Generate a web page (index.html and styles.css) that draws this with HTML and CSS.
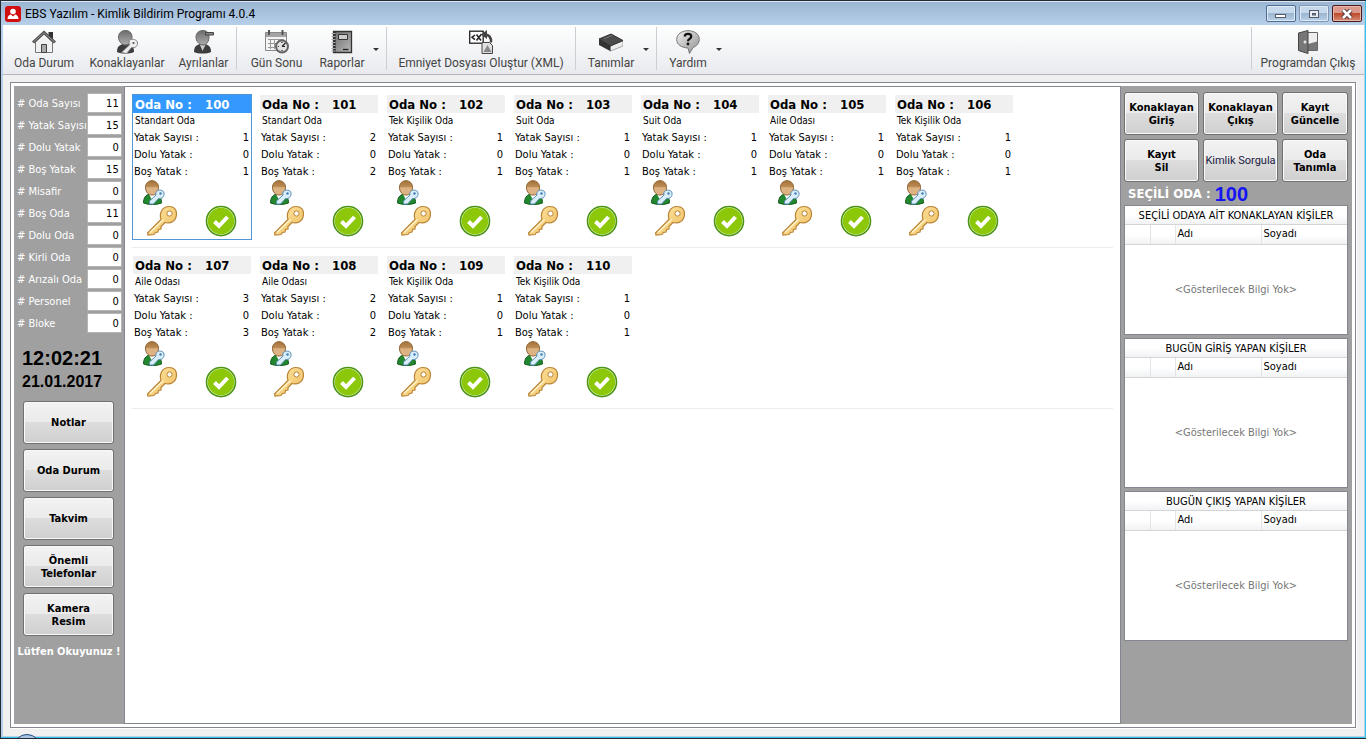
FILE: index.html
```
<!DOCTYPE html>
<html lang="tr">
<head>
<meta charset="utf-8">
<title>EBS Yazılım - Kimlik Bildirim Programı 4.0.4</title>
<link rel="stylesheet" href="styles.css">
</head>
<body>
<svg class="defs" aria-hidden="true">
  <defs>
    <linearGradient id="g-skin" x1="0" y1="0" x2="0" y2="1"><stop offset="0" stop-color="#a5713a"/><stop offset=".4" stop-color="#b98a52"/><stop offset=".5" stop-color="#dcb283"/><stop offset="1" stop-color="#e0b483"/></linearGradient>
    <linearGradient id="g-gray" x1="0" y1="0" x2="0" y2="1"><stop offset="0" stop-color="#6c6c6c"/><stop offset="1" stop-color="#adadad"/></linearGradient>
    <linearGradient id="g-key" x1="0" y1="0" x2="1" y2="1"><stop offset="0" stop-color="#ffe9a8"/><stop offset="1" stop-color="#eebb5c"/></linearGradient>
    <linearGradient id="g-bubble" x1="0" y1="0" x2="1" y2="1"><stop offset="0" stop-color="#efefef"/><stop offset="1" stop-color="#8f8f8f"/></linearGradient>
    <linearGradient id="g-book" x1="0" y1="0" x2="1" y2="1"><stop offset="0" stop-color="#6e6e6e"/><stop offset="1" stop-color="#b8b8b8"/></linearGradient>
  </defs>
  <symbol id="person" viewBox="0 0 24 26">
    <path d="M1.500 23c0-5 2-8 6-9h6c4 1 6 4 6 9-5 2-13 2-18 0z" fill="#23872f" stroke="#125c1c"/>
    <path d="M7 14l3 6 4-6z" fill="#fff"/>
    <path d="M3.500 7.500C3.500 3 6.500.7 10 .7s6.500 2.300 6.500 6.800c0 4.500-3 7.500-6.500 7.500s-6.500-3-6.500-7.500z" fill="url(#g-skin)" stroke="#8e6231"/>
    <path d="M14.500 11.500c2-2 7-2 7.500 1.500.5 3.500-2 6-5.500 5.500l-5 5.500H7.500v-3l6.500-6c-.3-1.500-.2-2.500.5-3.500z" fill="#d9edfb" stroke="#5d8fb8"/>
    <circle cx="18.500" cy="13.500" r="1.200" fill="#417eae"/>
  </symbol>
  <symbol id="key" viewBox="0 0 32 32">
    <path d="M1.500 28L15 14.500C13 8.500 16 1.500 23 1.500c5.500 0 7.500 3 7.500 7.500 0 7-6 10-11.500 8.500l-4 4V24l-2.500.5-.5 2.500-2.500.5-1.500 2-6 .5z" fill="url(#g-key)" stroke="#b98436" stroke-width="1.200"/>
    <circle cx="23.500" cy="8.500" r="2.600" fill="#fff" stroke="#b98436"/>
    <path d="M4 27.500L17.500 14.500" stroke="#fff3cb" stroke-width="1.500"/>
  </symbol>
  <symbol id="check" viewBox="0 0 32 32">
    <circle cx="16" cy="16.500" r="15" fill="#b5bfaa"/>
    <circle cx="16" cy="16" r="14.500" fill="#e4f5c4" stroke="#4b9414" stroke-width="1.600"/>
    <circle cx="16" cy="16" r="13.200" fill="#8cc70a"/>
    <path d="M9.500 16.500l4.500 4.500 8.500-9" fill="none" stroke="#fff" stroke-width="4"/>
  </symbol>
</svg>

<div class="window">
  <header class="titlebar">
    <svg class="app-icon" viewBox="0 0 16 16" aria-hidden="true"><rect width="16" height="16" rx="3" fill="#d10d0d"/><circle cx="8" cy="5.500" r="2.800" fill="#fff"/><path d="M2.500 13c0-3 2-4.500 3.500-4.500l2 2 2-2c1.500 0 3.500 1.500 3.500 4.500z" fill="#fff"/></svg>
    <h1 class="title">EBS Yazılım - Kimlik Bildirim Programı 4.0.4</h1>
    <div class="window-buttons">
      <button class="win-btn" aria-label="Simge durumuna küçült"><svg viewBox="0 0 12 10"><rect x=".5" y="5.500" width="10" height="3" fill="#fff" stroke="#555b66"/></svg></button>
      <button class="win-btn win-max" aria-label="Ekranı kapla"><svg viewBox="0 0 12 10"><rect x="1.500" y="1.500" width="9" height="7" fill="#e8eef4" stroke="#555b66"/><rect x="4.500" y="4.500" width="3" height="1.500" fill="#8ba5c0" stroke="#555b66"/></svg></button>
      <button class="win-btn win-close" aria-label="Kapat"><svg viewBox="0 0 12 10"><path d="M2 1l8 8M10 1L2 9" stroke="#45303a" stroke-width="4.500"/><path d="M2 1l8 8M10 1L2 9" stroke="#fff" stroke-width="2.600"/></svg></button>
    </div>
  </header>

  <nav class="toolbar">
    <button class="tool w-room"><svg viewBox="0 0 24 24"><path d="M16.500 2H21v9h-4.500z" fill="#333"/><path d="M3.500 12L12 4l8.500 8v10.500h-17z" fill="#f1f1f1" stroke="#777"/><path d="M1 12.500L12 2.500l11 10" fill="none" stroke="#4c4c4c" stroke-width="3"/><path d="M1.500 12L12 2.700 22.500 12" fill="none" stroke="#999" stroke-width="1"/><path d="M9.500 14.500h5v8h-5z" fill="#aaa" stroke="#444"/></svg>Oda Durum</button>
    <button class="tool w-guests"><svg viewBox="0 0 24 24"><path d="M2 22c0-5 2-7 6-8h5c4 1 6 3 6 8-4 2-13 2-17 0z" fill="#3d3d3d"/><path d="M3.500 7c0-4 3-6.500 7-6.500s6.500 2.500 6.500 6.500-2.500 8-6.500 8-7-4-7-8z" fill="url(#g-gray)" stroke="#666"/><path d="M14.500 10c3-1.500 8-.5 8 3s-2 5-6 4.500l-5 6-5-1 8-7.500c-.3-2-.5-4 0-5z" fill="#eee" stroke="#888"/><circle cx="18.500" cy="13" r="1.100" fill="#555"/></svg>Konaklayanlar</button>
    <button class="tool w-left"><svg viewBox="0 0 24 24"><path d="M2 22c0-5 2-7 6-8h5c4 1 6 3 6 8-4 2-13 2-17 0z" fill="#3d3d3d"/><path d="M8 15l2.500 6 3-6z" fill="#ccc"/><path d="M4 7c0-4 3-6.500 7-6.500s6 2.500 6 6.500-2 8-6 8-7-4-7-8z" fill="url(#g-gray)" stroke="#666"/><path d="M13.500 2.500h8v2.500h-8z" fill="#888" stroke="#444"/></svg>Ayrılanlar</button>
    <span class="sep"></span>
    <button class="tool w-day"><svg viewBox="0 0 24 24"><path d="M.5 2.500h21v18H.5z" fill="#f4f4f4" stroke="#888"/><path d="M1 3h20v4H1z" fill="#a4a4a4"/><path d="M4 0v5M17.500 0v5" stroke="#555" stroke-width="2"/><path d="M3 9.500h16M3 13.500h14M3 17.500h12M5.500 9v10M9.500 9v10M13.500 9v9" stroke="#999"/><circle cx="17" cy="16.500" r="6" fill="#e2e2e2" stroke="#666" stroke-width="2"/><path d="M17 16.500l3.500-3.500M17 16.500h3M17 12v1M12.800 16.500h1M17 20v1" stroke="#222" stroke-width="1.200"/></svg>Gün Sonu</button>
    <button class="tool w-reports"><svg viewBox="0 0 24 24"><path d="M3.500 1.500h18v21h-18z" fill="url(#g-book)" stroke="#333" stroke-width="1.300"/><path d="M4.500 1.500v21" stroke="#333" stroke-width="2.500"/><path d="M1.500 3.500h4M1.500 6.500h4M1.500 9.500h4M1.500 12.500h4M1.500 15.500h4M1.500 18.500h4M1.500 21h4" stroke="#aaa"/><path d="M8.500 4.500h9v5h-9z" fill="#ccc" stroke="#333"/><path d="M13 19.500h5.500" stroke="#222" stroke-width="1.300"/></svg>Raporlar</button>
    <button class="drop" aria-label="Raporlar menüsü"></button>
    <span class="sep"></span>
    <button class="tool w-xml"><svg viewBox="0 0 24 24"><rect x=".7" y="1.200" width="13.500" height="12" fill="#fff" stroke="#222" stroke-width="1.300"/><path d="M6 5L3 7.300 6 9.600M7.500 4.500l4.500 6M12.500 4l-5 6.500" fill="none" stroke="#222" stroke-width="1.500"/><path d="M13 12.500h7.500l3 3v8H13z" fill="#e0e0e0" stroke="#444"/><path d="M14.500 22l4-7 4 7z" fill="#888"/><path d="M16 4.500c4 0 6.500 3 6 8" fill="none" stroke="#444" stroke-width="2.500"/><path d="M18 0v9l-6-4.500z" fill="#444"/></svg>Emniyet Dosyası Oluştur (XML)</button>
    <span class="sep"></span>
    <button class="tool w-defs"><svg viewBox="0 0 24 24"><path d="M0 9v6l12 6.500V15z" fill="#333"/><path d="M11.500 15.500L24 11v5l-12.500 5z" fill="#eee" stroke="#777" stroke-width=".6"/><path d="M0 9l12-5 12 6.500-12.500 5.500z" fill="#4b4b4e" stroke="#333"/><path d="M5 8.800l8-3.300" stroke="#777"/></svg>Tanımlar</button>
    <button class="drop" aria-label="Tanımlar menüsü"></button>
    <span class="sep"></span>
    <button class="tool w-help"><svg viewBox="0 0 24 24"><path d="M12 .7c6 0 11.300 3 11.300 8.500 0 4-2.500 6.800-6.300 8.300l-3.500 6-1.500-5.500C5 17.500.7 14.500.7 9.500.7 4 6 .7 12 .7z" fill="url(#g-bubble)" stroke="#777"/><path d="M8.800 6.500c0-3.500 6.400-3.500 6.400 0 0 2.500-3.200 2.300-3.200 4.800" fill="none" stroke="#111" stroke-width="2.300"/><circle cx="12" cy="14" r="1.400" fill="#111"/></svg>Yardım</button>
    <button class="drop" aria-label="Yardım menüsü"></button>
    <span class="spring"></span>
    <span class="sep"></span>
    <button class="tool w-exit"><svg viewBox="0 0 24 24"><path d="M11 2.500h10.500v18H11z" fill="#eee" stroke="#666"/><path d="M12 14l9-2.500V20h-9z" fill="#777"/><path d="M2.500 3l9.500-2.500v23L2.500 20.500z" fill="#777" stroke="#444"/><path d="M9 10.500v3M7.500 12h3" stroke="#fff" stroke-width="1.200"/></svg>Programdan Çıkış</button>
  </nav>

  <main class="client">
    <div class="frame">
      <aside class="sidebar">
        <div class="stats">
          <label for="s1"># Oda Sayısı</label><input id="s1" value="11" readonly>
          <label for="s2"># Yatak Sayısı</label><input id="s2" value="15" readonly>
          <label for="s3"># Dolu Yatak</label><input id="s3" value="0" readonly>
          <label for="s4"># Boş Yatak</label><input id="s4" value="15" readonly>
          <label for="s5"># Misafir</label><input id="s5" value="0" readonly>
          <label for="s6"># Boş Oda</label><input id="s6" value="11" readonly>
          <label for="s7"># Dolu Oda</label><input id="s7" value="0" readonly>
          <label for="s8"># Kirli Oda</label><input id="s8" value="0" readonly>
          <label for="s9"># Arızalı Oda</label><input id="s9" value="0" readonly>
          <label for="s10"># Personel</label><input id="s10" value="0" readonly>
          <label for="s11"># Bloke</label><input id="s11" value="0" readonly>
        </div>
        <time class="clock">12:02:21</time>
        <time class="date">21.01.2017</time>
        <div class="side-buttons">
          <button class="btn">Notlar</button>
          <button class="btn">Oda Durum</button>
          <button class="btn">Takvim</button>
          <button class="btn">Önemli<br>Telefonlar</button>
          <button class="btn">Kamera<br>Resim</button>
        </div>
        <p class="notice">Lütfen Okuyunuz !</p>
      </aside>

      <section class="rooms">
        <div class="room-row">
          <article class="room selected"><h2><span>Oda No :</span>100</h2><p class="kind">Standart Oda</p><dl><dt>Yatak Sayısı :</dt><dd>1</dd><dt>Dolu Yatak :</dt><dd>0</dd><dt>Boş Yatak :</dt><dd>1</dd></dl><div class="icons"><svg class="person"><use href="#person"/></svg><svg class="key"><use href="#key"/></svg><svg class="check"><use href="#check"/></svg></div></article>
          <article class="room"><h2><span>Oda No :</span>101</h2><p class="kind">Standart Oda</p><dl><dt>Yatak Sayısı :</dt><dd>2</dd><dt>Dolu Yatak :</dt><dd>0</dd><dt>Boş Yatak :</dt><dd>2</dd></dl><div class="icons"><svg class="person"><use href="#person"/></svg><svg class="key"><use href="#key"/></svg><svg class="check"><use href="#check"/></svg></div></article>
          <article class="room"><h2><span>Oda No :</span>102</h2><p class="kind">Tek Kişilik Oda</p><dl><dt>Yatak Sayısı :</dt><dd>1</dd><dt>Dolu Yatak :</dt><dd>0</dd><dt>Boş Yatak :</dt><dd>1</dd></dl><div class="icons"><svg class="person"><use href="#person"/></svg><svg class="key"><use href="#key"/></svg><svg class="check"><use href="#check"/></svg></div></article>
          <article class="room"><h2><span>Oda No :</span>103</h2><p class="kind">Suit Oda</p><dl><dt>Yatak Sayısı :</dt><dd>1</dd><dt>Dolu Yatak :</dt><dd>0</dd><dt>Boş Yatak :</dt><dd>1</dd></dl><div class="icons"><svg class="person"><use href="#person"/></svg><svg class="key"><use href="#key"/></svg><svg class="check"><use href="#check"/></svg></div></article>
          <article class="room"><h2><span>Oda No :</span>104</h2><p class="kind">Suit Oda</p><dl><dt>Yatak Sayısı :</dt><dd>1</dd><dt>Dolu Yatak :</dt><dd>0</dd><dt>Boş Yatak :</dt><dd>1</dd></dl><div class="icons"><svg class="person"><use href="#person"/></svg><svg class="key"><use href="#key"/></svg><svg class="check"><use href="#check"/></svg></div></article>
          <article class="room"><h2><span>Oda No :</span>105</h2><p class="kind">Aile Odası</p><dl><dt>Yatak Sayısı :</dt><dd>1</dd><dt>Dolu Yatak :</dt><dd>0</dd><dt>Boş Yatak :</dt><dd>1</dd></dl><div class="icons"><svg class="person"><use href="#person"/></svg><svg class="key"><use href="#key"/></svg><svg class="check"><use href="#check"/></svg></div></article>
          <article class="room"><h2><span>Oda No :</span>106</h2><p class="kind">Tek Kişilik Oda</p><dl><dt>Yatak Sayısı :</dt><dd>1</dd><dt>Dolu Yatak :</dt><dd>0</dd><dt>Boş Yatak :</dt><dd>1</dd></dl><div class="icons"><svg class="person"><use href="#person"/></svg><svg class="key"><use href="#key"/></svg><svg class="check"><use href="#check"/></svg></div></article>
        </div>
        <div class="room-row">
          <article class="room"><h2><span>Oda No :</span>107</h2><p class="kind">Aile Odası</p><dl><dt>Yatak Sayısı :</dt><dd>3</dd><dt>Dolu Yatak :</dt><dd>0</dd><dt>Boş Yatak :</dt><dd>3</dd></dl><div class="icons"><svg class="person"><use href="#person"/></svg><svg class="key"><use href="#key"/></svg><svg class="check"><use href="#check"/></svg></div></article>
          <article class="room"><h2><span>Oda No :</span>108</h2><p class="kind">Aile Odası</p><dl><dt>Yatak Sayısı :</dt><dd>2</dd><dt>Dolu Yatak :</dt><dd>0</dd><dt>Boş Yatak :</dt><dd>2</dd></dl><div class="icons"><svg class="person"><use href="#person"/></svg><svg class="key"><use href="#key"/></svg><svg class="check"><use href="#check"/></svg></div></article>
          <article class="room"><h2><span>Oda No :</span>109</h2><p class="kind">Tek Kişilik Oda</p><dl><dt>Yatak Sayısı :</dt><dd>1</dd><dt>Dolu Yatak :</dt><dd>0</dd><dt>Boş Yatak :</dt><dd>1</dd></dl><div class="icons"><svg class="person"><use href="#person"/></svg><svg class="key"><use href="#key"/></svg><svg class="check"><use href="#check"/></svg></div></article>
          <article class="room"><h2><span>Oda No :</span>110</h2><p class="kind">Tek Kişilik Oda</p><dl><dt>Yatak Sayısı :</dt><dd>1</dd><dt>Dolu Yatak :</dt><dd>0</dd><dt>Boş Yatak :</dt><dd>1</dd></dl><div class="icons"><svg class="person"><use href="#person"/></svg><svg class="key"><use href="#key"/></svg><svg class="check"><use href="#check"/></svg></div></article>
        </div>
      </section>

      <aside class="panel">
        <div class="actions">
          <button class="btn">Konaklayan<br>Giriş</button>
          <button class="btn">Konaklayan<br>Çıkış</button>
          <button class="btn">Kayıt<br>Güncelle</button>
          <button class="btn">Kayıt<br>Sil</button>
          <button class="btn plain">Kimlik Sorgula</button>
          <button class="btn">Oda<br>Tanımla</button>
        </div>
        <p class="chosen">SEÇİLİ ODA : <strong>100</strong></p>
        <div class="grid-box short">
          <table><caption>SEÇİLİ ODAYA AİT KONAKLAYAN KİŞİLER</caption><thead><tr><th class="c-mark"></th><th class="c-mark"></th><th class="c-name">Adı</th><th>Soyadı</th></tr></thead></table>
          <p class="empty">&lt;Gösterilecek Bilgi Yok&gt;</p>
        </div>
        <div class="grid-box">
          <table><caption>BUGÜN GİRİŞ YAPAN KİŞİLER</caption><thead><tr><th class="c-mark"></th><th class="c-mark"></th><th class="c-name">Adı</th><th>Soyadı</th></tr></thead></table>
          <p class="empty">&lt;Gösterilecek Bilgi Yok&gt;</p>
        </div>
        <div class="grid-box">
          <table><caption>BUGÜN ÇIKIŞ YAPAN KİŞİLER</caption><thead><tr><th class="c-mark"></th><th class="c-mark"></th><th class="c-name">Adı</th><th>Soyadı</th></tr></thead></table>
          <p class="empty">&lt;Gösterilecek Bilgi Yok&gt;</p>
        </div>
      </aside>
    </div>
  </main>
  <div class="orb"></div>
</div>
</body>
</html>
```
FILE: styles.css
```
* { box-sizing: border-box; }
body {
  margin: 0;
  background: #2b3440;
  color: #000;
  font: 11px/13px "DejaVu Sans Condensed", "DejaVu Sans", sans-serif;
}
h1, h2, p, dl, dd { margin: 0; }
button, input { font: inherit; color: inherit; }
svg { display: block; }
.defs { position: absolute; width: 0; height: 0; }

.window {
  position: relative;
  display: flex;
  flex-direction: column;
  height: 100vh;
  overflow: hidden;
  background: #b7cfe9;
  border: solid #222a33;
  border-width: 1px 0 1px 1px;
}
.window::before {
  content: "";
  position: absolute;
  inset: 0;
  border: solid #35c3e8;
  border-width: 0 1px 1px 0;
  pointer-events: none;
}

/* Title bar */
.titlebar {
  display: flex;
  align-items: center;
  flex: none;
  height: 24px;
  padding: 0 4px;
  gap: 4px;
  background: linear-gradient(#9bb6d4, #b7cfe9);
  border-top: 1px solid #dce8f4;
}
.app-icon { width: 16px; height: 16px; }
.title { font: 12px/16px Roboto, sans-serif; flex: 1; }
.window-buttons { display: flex; gap: 3px; }
.win-btn {
  display: flex;
  align-items: center;
  justify-content: center;
  width: 30px;
  height: 17px;
  padding: 0;
  border: 1px solid #4f6d91;
  border-radius: 2px;
  background: linear-gradient(#c6d8eb 45%, #9cb5d0 50%, #b9d2ea);
  box-shadow: inset 0 0 0 1px #dfeaf5;
}
.win-btn svg { width: 12px; height: 10px; }
.win-max { border-color: #8199b6; }
.win-close {
  border-color: #4a1a1a;
  background: linear-gradient(#dd9a8c 45%, #bd4a2b 50%, #d68c76);
  box-shadow: inset 0 0 0 1px #e8b6ab;
}

/* Toolbar */
.toolbar {
  display: flex;
  flex: none;
  height: 50px;
  margin: 0 2px;
  padding: 2px 0 2px 2px;
  background: linear-gradient(#fff, #e8eaee);
  border-bottom: 1px solid #b4b8be;
  color: #444;
  font: 12px/16px Roboto, sans-serif;
}
.tool {
  display: flex;
  flex-direction: column;
  align-items: center;
  flex: none;
  padding: 3px 0 0;
  border: 0;
  background: none;
  white-space: nowrap;
}
.tool svg { width: 24px; height: 24px; margin-bottom: 1px; }
.w-room { width: 78px; }
.w-guests { width: 88px; }
.w-left { width: 65px; }
.w-day { width: 79px; }
.w-reports { width: 56px; padding-right: 4px; }
.w-xml { width: 188px; }
.w-defs { width: 66px; padding-left: 4px; }
.w-help { width: 58px; padding-left: 4px; }
.w-exit { width: 112px; }
.sep { flex: none; width: 1px; margin: 0 0 2px; background: #cbced3; }
.spring { flex: 1; }
.drop {
  flex: none;
  width: 8px;
  margin-right: 6px;
  padding: 0;
  border: 0;
  background: none;
}
.drop::before {
  content: "";
  display: block;
  margin: 0 auto;
  width: 0;
  border: solid transparent;
  border-width: 3px 3px 0;
  border-top-color: #333;
}

/* Client area */
.client {
  display: flex;
  flex: 1;
  min-height: 0;
  margin: 0 2px 2px 1px;
  padding: 7px 8px 8px 7px;
  background: #f0f0f0;
  border-left: 1px solid #b7cfe9;
}
.frame {
  display: flex;
  flex: 1;
  padding: 3px;
  background: #fff;
  border: 1px solid #828790;
  box-shadow: 1px 1px 0 #fff;
}
.sidebar {
  flex: none;
  width: 110px;
  padding: 7px 3px 0;
  background: #a0a0a0;
}
.stats {
  display: grid;
  grid-template-columns: 1fr 35px;
  grid-auto-rows: 20px;
  row-gap: 2px;
  align-items: center;
  color: #fff;
  white-space: nowrap;
}
.stats input {
  width: 100%;
  height: 20px;
  padding: 0 2px;
  border: 1px solid #b4b4b4;
  background: #fff;
  color: #000;
  text-align: right;
}
.clock, .date {
  display: block;
  margin-left: 5px;
  font: bold 20px/24px "Liberation Sans", sans-serif;
}
.clock { margin-top: 13px; }
.date { font-size: 16px; }
.side-buttons { display: grid; gap: 5px; margin: 7px 7px 0 6px; }
.btn {
  height: 43px;
  padding: 0;
  border: 1px solid #707070;
  border-radius: 3px;
  background: linear-gradient(#f2f2f2, #ebebeb 49%, #dddddd 50%, #cfcfcf);
  box-shadow: inset 0 0 0 1px #fafafa;
  font-weight: bold;
  white-space: nowrap;
}
.btn.plain { font: 11px/13px Roboto, sans-serif; color: #1b1b45; }
.notice { margin-top: 9px; color: #fff; font-weight: bold; text-align: center; white-space: nowrap; }

/* Rooms */
.rooms {
  flex: 1;
  min-width: 0;
  padding: 7px;
  background: #fff;
  border: 1px solid #828790;
}
.room-row {
  display: flex;
  gap: 7px;
  padding-bottom: 7px;
  margin-bottom: 7px;
  border-bottom: 1px solid #ececec;
}
.room {
  width: 120px;
  height: 146px;
  border: 1px solid transparent;
}
.room.selected { border-color: #4f97d6; }
.room h2 {
  display: flex;
  height: 18px;
  padding: 0 2px;
  background: #f0f0f0;
  font-size: 13px;
  line-height: 19px;
}
.room h2 span { width: 70px; }
.room.selected h2 { background: #3399ff; color: #fff; }
.kind { padding-left: 2px; font-size: 10px; line-height: 16px; }
.room dl { display: grid; grid-template-columns: 1fr auto; padding: 0 2px 0 1px; line-height: 17px; }
.icons { display: grid; grid-template: 25px 32px / 59px 32px; padding-left: 13px; }
.person { grid-column: 1 / 3; width: 24px; height: 26px; margin-left: -4px; }
.key, .check { width: 32px; height: 32px; }

/* Right panel */
.panel { flex: none; width: 231px; padding: 6px 4px 0 3px; background: #a0a0a0; }
.actions { display: grid; grid-template-columns: 75px 75px 1fr; gap: 4px; }
.chosen {
  display: flex;
  align-items: center;
  gap: 4px;
  height: 23px;
  padding-left: 4px;
  color: #fff;
  font-size: 13px;
  font-weight: bold;
}
.chosen strong { color: #1414f5; font: bold 20px/24px "Liberation Sans", sans-serif; }
.grid-box {
  display: flex;
  flex-direction: column;
  height: 150px;
  margin-bottom: 3px;
  background: #fff;
  border: 1px solid #828790;
}
.grid-box.short { height: 130px; }
.grid-box table { width: 100%; table-layout: fixed; border-collapse: collapse; }
.grid-box caption, .grid-box th {
  height: 19px;
  padding: 0;
  background: linear-gradient(#fff 50%, #f1f2f4);
  border-bottom: 1px solid #d5d5d5;
  line-height: 18px;
  white-space: nowrap;
}
.grid-box caption { line-height: 20px; }
.grid-box th { padding-left: 2px; font-weight: normal; text-align: left; border-right: 1px solid #e3e4e6; }
.grid-box th:last-child { border-right: 0; }
.c-mark { width: 25px; }
.c-name { width: 86px; }
.empty { display: flex; flex: 1; align-items: center; justify-content: center; color: #777; }

.orb {
  position: absolute;
  left: 12px;
  bottom: -24px;
  width: 28px;
  height: 28px;
  border: 1px solid #1d4d80;
  border-radius: 50%;
  background: #a9c4df;
}
```
